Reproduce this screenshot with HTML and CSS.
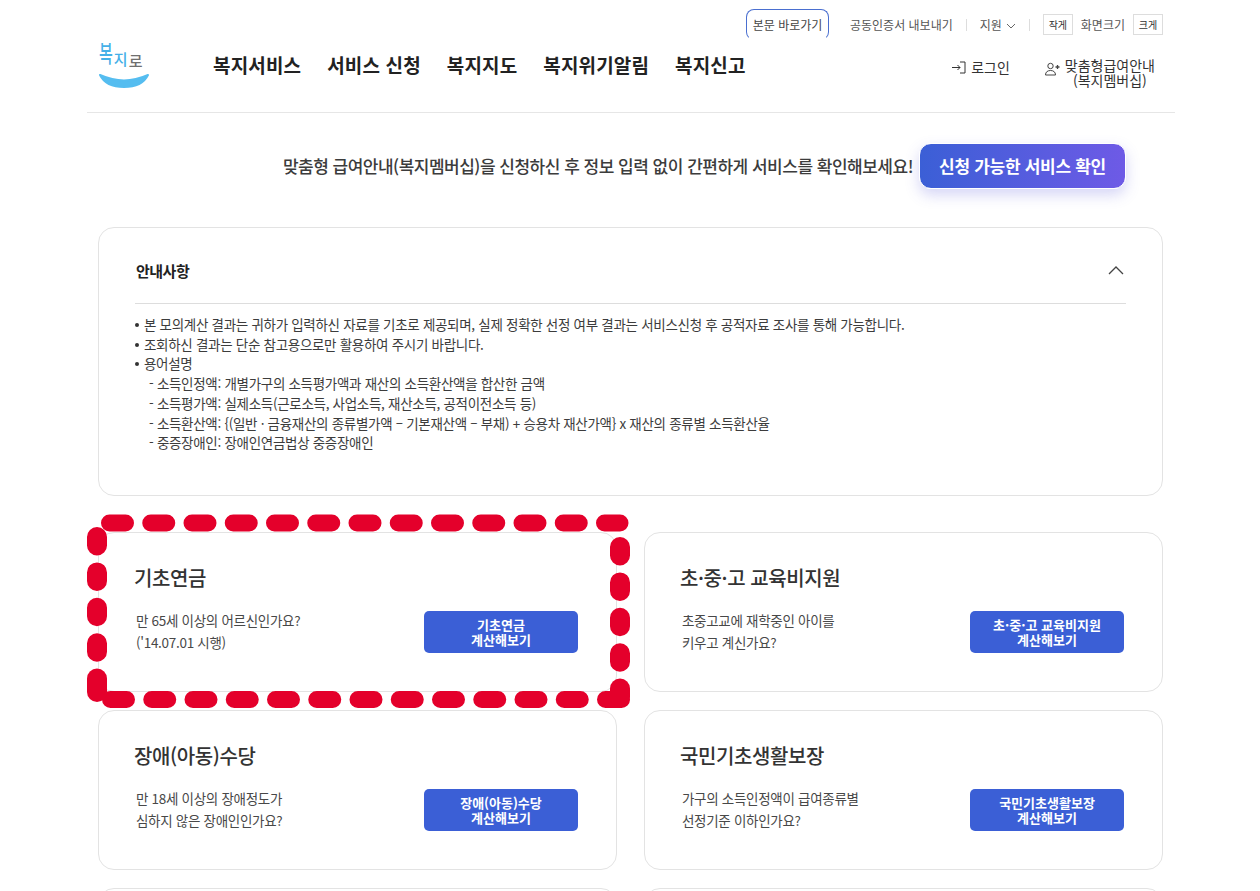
FILE: index.html
```html
<!DOCTYPE html>
<html lang="ko">
<head>
    <meta charset="UTF-8">
    <meta name="viewport" content="width=device-width, initial-scale=1.0">
    <title>복지로 - 모의계산</title>
    <link rel="stylesheet" href="styles.css">
</head>
<body>
    <div class="page">
        <!-- 상단 유틸 -->
        <div class="util">
            <a class="skip" href="#main">본문 바로가기</a>
            <a class="util-link cert" href="#">공동인증서 내보내기</a>
            <span class="util-sep"></span>
            <a class="util-link" href="#">지원
                <svg class="util-arrow" width="10" height="6" viewBox="0 0 10 6"><path d="M1 1l4 4 4-4" fill="none" stroke="#666" stroke-width="1"/></svg>
            </a>
            <span class="util-sep"></span>
            <button class="size-btn">작게</button>
            <span class="util-link size-label">화면크기</span>
            <button class="size-btn">크게</button>
        </div>

        <!-- 헤더 -->
        <header class="header">
            <a class="logo" href="#">
                <span class="logo-text"><span class="logo-bok">복</span><span class="logo-ji">지</span><span class="logo-ro">로</span></span>
                <svg class="logo-smile" width="54" height="17" viewBox="0 0 54 17"><path d="M3 3C12 7 19 8.500 27 8.500S42 7 51 3C47 11 38 15 27 15S7 11 3 3z" fill="#55bdf0" stroke="#55bdf0" stroke-width="2" stroke-linejoin="round"/></svg>
            </a>
            <nav class="gnb">
                <a href="#">복지서비스</a>
                <a href="#">서비스 신청</a>
                <a href="#">복지지도</a>
                <a href="#">복지위기알림</a>
                <a href="#">복지신고</a>
            </nav>
            <div class="member">
                <a class="login" href="#">
                    <svg width="14" height="13" viewBox="0 0 14 13"><path d="M0 6.500h8M5.500 4L8 6.500 5.500 9M8 1h5v11H8" fill="none" stroke="#333" stroke-width="1"/></svg>
                    로그인
                </a>
                <a class="join" href="#">
                    <svg width="17" height="14" viewBox="0 0 17 14"><circle cx="6.500" cy="4" r="2.700" fill="none" stroke="#444"/><path d="M1.500 13c0-3 2-4.500 5-4.500s5 1.500 5 4.500z" fill="none" stroke="#444"/><path d="M11.500 5h4M13.500 3v4" stroke="#444" stroke-width="1.300"/></svg>
                    <span class="join-text">맞춤형급여안내<br>(복지멤버십)</span>
                </a>
            </div>
        </header>

        <main id="main" class="content">
            <div class="banner">
                <p>맞춤형 급여안내(복지멤버십)을 신청하신 후 정보 입력 없이 간편하게 서비스를 확인해보세요!</p>
                <button class="btn-check">신청 가능한 서비스 확인</button>
            </div>

            <section class="notice">
                <div class="notice-head">
                    <h2>안내사항</h2>
                    <svg width="16" height="9" viewBox="0 0 16 9"><path d="M1 8l7-7 7 7" fill="none" stroke="#444" stroke-width="1.300"/></svg>
                </div>
                <ul class="notice-list">
                    <li>본 모의계산 결과는 귀하가 입력하신 자료를 기초로 제공되며, 실제 정확한 선정 여부 결과는 서비스신청 후 공적자료 조사를 통해 가능합니다.</li>
                    <li>조회하신 결과는 단순 참고용으로만 활용하여 주시기 바랍니다.</li>
                    <li>용어설명
                        <p>- 소득인정액: 개별가구의 소득평가액과 재산의 소득환산액을 합산한 금액</p>
                        <p>- 소득평가액: 실제소득(근로소득, 사업소득, 재산소득, 공적이전소득 등)</p>
                        <p>- 소득환산액: {(일반 · 금융재산의 종류별가액 – 기본재산액 – 부채) + 승용차 재산가액} x 재산의 종류별 소득환산율</p>
                        <p>- 중증장애인: 장애인연금법상 중증장애인</p>
                    </li>
                </ul>
            </section>

            <div class="cards">
                <article class="card">
                    <h3>기초연금</h3>
                    <div class="card-body">
                        <p>만 65세 이상의 어르신인가요?<br>('14.07.01 시행)</p>
                        <button class="btn-calc">기초연금<br>계산해보기</button>
                    </div>
                    <svg class="mark" width="550" height="200" viewBox="0 0 550 200">
                        <path class="mark-h" d="M24.500 12H535"/>
                        <path class="mark-h" d="M25.500 188.500H537"/>
                        <path class="mark-v" d="M12 26V150"/>
                        <path class="mark-c" d="M12 167.600V181"/>
                        <path class="mark-v" d="M535 36V165"/>
                        <path class="mark-c" d="M535 177.600V186"/>
                    </svg>
                </article>
                <article class="card">
                    <h3>초·중·고 교육비지원</h3>
                    <div class="card-body">
                        <p>초중고교에 재학중인 아이를<br>키우고 계신가요?</p>
                        <button class="btn-calc">초·중·고 교육비지원<br>계산해보기</button>
                    </div>
                </article>
                <article class="card">
                    <h3>장애(아동)수당</h3>
                    <div class="card-body">
                        <p>만 18세 이상의 장애정도가<br>심하지 않은 장애인인가요?</p>
                        <button class="btn-calc">장애(아동)수당<br>계산해보기</button>
                    </div>
                </article>
                <article class="card">
                    <h3>국민기초생활보장</h3>
                    <div class="card-body">
                        <p>가구의 소득인정액이 급여종류별<br>선정기준 이하인가요?</p>
                        <button class="btn-calc">국민기초생활보장<br>계산해보기</button>
                    </div>
                </article>
                <article class="card"></article>
                <article class="card"></article>
            </div>
        </main>
    </div>
</body>
</html>
```

FILE: styles.css
```css
html, body {
    height: 891px;
    overflow: hidden;
}

body {
    margin: 0;
    font-family: "Noto Sans CJK KR", "Noto Sans", sans-serif;
    color: #333;
    background-color: #fff;
}

a {
    color: inherit;
    text-decoration: none;
}

button {
    font-family: inherit;
    cursor: pointer;
}

.page {
    width: 1088px;
    margin-left: 87px;
}

/* 상단 유틸 */
.util {
    display: flex;
    justify-content: flex-end;
    align-items: center;
    height: 40px;
    padding: 9px 12px 0 0;
    box-sizing: border-box;
    font-size: 12px;
    color: #555;
}

.skip {
    display: flex;
    align-items: center;
    justify-content: center;
    width: 83px;
    height: 31px;
    box-sizing: border-box;
    margin-right: 21px;
    border: 1.500px solid #4a6fd0;
    border-bottom-color: transparent;
    border-radius: 8px;
    margin-top: -1px;
    color: #444;
}

.util-link {
    display: flex;
    align-items: center;
    gap: 4px;
}

.util-arrow {
    margin-top: 2px;
}

.util-sep {
    width: 1px;
    height: 12px;
    margin: 0 13px;
    background-color: #ddd;
}

.size-btn {
    width: 30px;
    height: 21px;
    padding: 0;
    border: 1px solid #ddd;
    background-color: #fff;
    font-size: 10px;
    color: #333;
}

.size-label {
    margin: 0 8px;
}

/* 헤더 */
.header {
    display: flex;
    align-items: flex-start;
    height: 73px;
    padding-left: 10px;
    border-bottom: 1.500px solid #e6e6e6;
    box-sizing: border-box;
}

.logo {
    display: flex;
    flex-direction: column;
    width: 54px;
    margin-right: 62px;
}

.logo-text {
    display: flex;
    gap: 1px;
    height: 32px;
    padding-left: 2px;
    font-size: 15px;
    font-weight: 500;
    line-height: 24px;
}

.logo-bok {
    color: #45b0e8;
    transform: translateY(3px) scaleY(1.500);
}

.logo-ji {
    color: #45b0e8;
    transform: translateY(7px);
}

.logo-ro {
    color: #6f6f6f;
    transform: translateY(9px);
}

.gnb {
    display: flex;
    gap: 26px;
    margin-top: 9px;
    font-size: 19px;
    font-weight: 700;
    line-height: 32px;
    letter-spacing: 0.150px;
    color: #222;
}

.member {
    display: flex;
    margin-left: auto;
    margin-right: 20px;
    margin-top: 16px;
    font-size: 14px;
    line-height: 14px;
    color: #333;
}

.login {
    display: flex;
    align-items: center;
    gap: 5px;
    height: 22px;
    margin-right: 34px;
}

.join {
    display: flex;
    gap: 4px;
    margin-top: 2px;
}

.join svg {
    margin-top: 4px;
}

.join-text {
    text-align: center;
    line-height: 14.500px;
}

/* 배너 */
.content {
    padding: 0 12px 0 11px;
}

.banner {
    display: flex;
    align-items: center;
    justify-content: flex-end;
    gap: 6px;
    height: 44px;
    margin-top: 31px;
    padding-right: 37px;
}

.banner p {
    margin: 0 0 2px;
    font-size: 17px;
    font-weight: 500;
    letter-spacing: -0.500px;
    color: #3c3c3c;
}

.btn-check {
    width: 207px;
    height: 46px;
    padding: 0 0 2px;
    border: 1px solid #fff;
    border-radius: 12px;
    background: linear-gradient(to right, #3b5fd6, #6e5ae6);
    box-shadow: 0 6px 14px rgba(90, 90, 220, 0.25);
    font-size: 17px;
    font-weight: 700;
    letter-spacing: -0.300px;
    color: #fff;
}

/* 안내사항 */
.notice {
    height: 269px;
    margin-top: 39px;
    padding: 0 36px 0 36px;
    border: 1.500px solid #e3e3e3;
    border-radius: 16px;
    box-sizing: border-box;
}

.notice-head {
    display: flex;
    justify-content: space-between;
    align-items: center;
    height: 76px;
    padding: 9px 2px 0 0;
    box-sizing: border-box;
    border-bottom: 1px solid #ddd;
}

.notice-head h2 {
    margin: 0 0 0 1px;
    font-size: 15px;
    font-weight: 700;
    letter-spacing: -0.500px;
    color: #222;
}

.notice-list {
    margin: 11px 0 0;
    padding: 0;
    list-style: none;
    font-size: 13.500px;
    line-height: 19.700px;
    letter-spacing: -0.300px;
    color: #3c3c3c;
}

.notice-list li {
    padding-left: 9px;
    position: relative;
}

.notice-list li::before {
    content: "";
    position: absolute;
    left: 0;
    top: 8px;
    width: 4px;
    height: 4px;
    border-radius: 50%;
    background-color: #333;
}

.notice-list p {
    margin: 0 0 0 5px;
}

/* 카드 */
.cards {
    display: grid;
    grid-template-columns: 519px 519px;
    grid-auto-rows: 160px;
    gap: 18px 27px;
    margin-top: 36px;
}

.card {
    position: relative;
    padding: 28px 37px 0 36px;
    border: 1.500px solid #e3e3e3;
    border-radius: 16px;
    box-sizing: border-box;
}

.card h3 {
    margin: 0 0 0 -1px;
    font-size: 20px;
    font-weight: 500;
    line-height: 34px;
    letter-spacing: -0.400px;
    color: #333;
}

.card-body {
    display: flex;
    justify-content: space-between;
    align-items: center;
    margin-top: 15px;
}

.card-body p {
    margin: 0 0 0 1px;
    font-size: 13.500px;
    line-height: 21.500px;
    letter-spacing: -0.300px;
    color: #484848;
}

.btn-calc {
    width: 154px;
    height: 42px;
    margin: 1px 1px 0 0;
    padding: 0;
    border: none;
    border-radius: 5px;
    background-color: #3b5fd6;
    font-size: 13px;
    font-weight: 700;
    line-height: 15px;
    color: #fff;
}

/* 빨간 점선 강조 */
.mark {
    position: absolute;
    left: -14px;
    top: -22px;
    fill: none;
    stroke: #e4002b;
    stroke-linecap: round;
}

.mark-h {
    stroke-width: 17;
    stroke-dasharray: 16 25.250;
}

.mark-v {
    stroke-width: 20;
    stroke-dasharray: 8.500 26.900;
}

.mark-c {
    stroke-width: 20;
}
```
